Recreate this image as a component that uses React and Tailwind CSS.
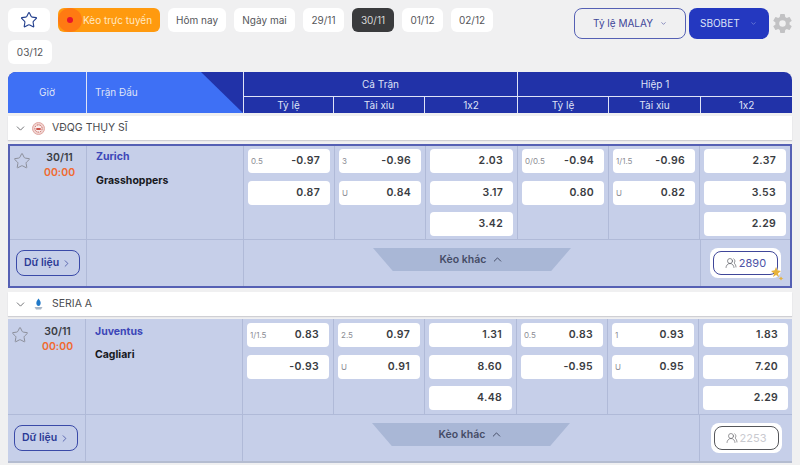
import React from "react";
import { Star, ChevronDown, ChevronUp, ChevronRight, UsersRound } from "lucide-react";
import { IoSettingsSharp } from "react-icons/io5";

const dates = [
	{ label: "Hôm nay", w: "w-[58px]" },
	{ label: "Ngày mai", w: "w-[61px]" },
	{ label: "29/11", w: "w-[41px]" },
	{ label: "30/11", w: "w-[42px]", active: true },
	{ label: "01/12", w: "w-[41px]" },
	{ label: "02/12", w: "w-[42px]" },
	{ label: "03/12", w: "w-[44px]" },
];

const matches = [
	{
		home: "Zurich",
		away: "Grasshoppers",
		selected: true,
		count: "2890",
		odds: [
			[["0.5", "-0.97"], ["", "0.87"]],
			[["3", "-0.96"], ["U", "0.84"]],
			[["", "2.03"], ["", "3.17"], ["", "3.42"]],
			[["0/0.5", "-0.94"], ["", "0.80"]],
			[["1/1.5", "-0.96"], ["U", "0.82"]],
			[["", "2.37"], ["", "3.53"], ["", "2.29"]],
		],
	},
	{
		home: "Juventus",
		away: "Cagliari",
		count: "2253",
		odds: [
			[["1/1.5", "0.83"], ["", "-0.93"]],
			[["2.5", "0.97"], ["U", "0.91"]],
			[["", "1.31"], ["", "8.60"], ["", "4.48"]],
			[["0.5", "0.83"], ["", "-0.95"]],
			[["1", "0.93"], ["U", "0.95"]],
			[["", "1.83"], ["", "7.20"], ["", "2.29"]],
		],
	},
];

const Pill = ({ item }) => (
	<button
		className={`h-6 ${item.w} rounded-md text-[10px] ${
			item.active ? "bg-[#3a3b3d] text-[#d8d8d8]" : "bg-white text-[#55565a]"
		}`}
	>
		{item.label}
	</button>
);

const SwissLogo = () => (
	<svg width="13" height="13" viewBox="0 0 13 13">
		<circle cx="6.5" cy="6.5" r="6" fill="#f0d3d0" stroke="#dfa7a2" />
		<circle cx="6.5" cy="6.5" r="3.6" fill="#fbeeee" stroke="#c9685f" strokeDasharray="1.5 1" />
		<rect x="4.3" y="6" width="4.4" height="2" fill="#c9524a" />
	</svg>
);

const SerieLogo = () => (
	<svg width="13" height="13" viewBox="0 0 13 13">
		<path d="M6.500 0.500C8.200 2.400 8.900 4 8.600 5.800 8.300 7.400 7.500 8 6.500 8S4.700 7.400 4.400 5.800C4.100 4 4.800 2.400 6.500 0.500Z" fill="#1f78c8" />
		<path d="M2.500 9 10.500 9 9 11.500 4 11.500Z" fill="#a8b6c6" />
	</svg>
);

const League = ({ name, logo }) => (
	<div className="flex h-6 items-center bg-white pl-[6px] text-[10.5px] text-[#4a4b50] shadow-[0_1px_1px_#cfcfd4]">
		<ChevronDown size={13} strokeWidth={1.5} className="text-[#55565a]" />
		<span className="ml-[5px] flex w-[13px] justify-center">{logo}</span>
		<span className="ml-[7px]">{name}</span>
	</div>
);

const OddCell = ({ label, value }) => (
	<div className="flex h-[24px] items-center justify-between rounded-[4px] bg-white pl-[3px] pr-[10px]">
		<span className="text-[8px] text-[#8b8d94]">{label}</span>
		<span className="text-[10.5px] font-semibold tracking-[0.3px] text-[#3a3c42]">{value}</span>
	</div>
);

const Match = ({ match }) => {
	const { selected } = match;
	return (
		<div
			className={`grid bg-[#c6cfe9] ${
				selected
					? "grid-cols-[77px_157px_91px_91px_92px_91px_91px_90px] grid-rows-[93px_47px] border-2 border-[#5560b4]"
					: "grid-cols-[78px_157px_91px_91px_92px_91px_91px_93px] grid-rows-[95px_47px] border-b-2 border-[#b4bcd0]"
			}`}
		>
			<div className={`flex border-r border-[#b0bad8] pl-[3px] ${selected ? "pt-[4px]" : "pt-[5px]"}`}>
				<Star size={18} strokeWidth={1.3} className="mt-[2px] text-[#8a8d98]" />
				<div className="ml-[13px] flex flex-col items-center text-[10.5px] font-semibold leading-[15px]">
					<span className="text-[#3a3c42]">30/11</span>
					<span className="text-[#f06a30]">00:00</span>
				</div>
			</div>
			<div
				className={`flex flex-col border-r border-[#b0bad8] pl-[9px] text-[10.5px] font-bold leading-[14px] ${
					selected ? "gap-[10px] pt-[4px]" : "gap-[9px] pt-[6px]"
				}`}
			>
				<span className="text-[#3c46b8]">{match.home}</span>
				<span className="text-[#17181c]">{match.away}</span>
			</div>
			{match.odds.map((col, i) => (
				<div
					key={i}
					className={`flex flex-col gap-[7.5px] px-[4px] ${selected ? "pt-[3px]" : "pt-[4px]"} ${
						i < 5 ? "border-r border-[#b0bad8]" : ""
					}`}
				>
					{col.map((odd, j) => (
						<OddCell key={j} label={odd[0]} value={odd[1]} />
					))}
				</div>
			))}
			<div className="flex items-center border-r border-t border-[#b0bad8] pl-[6px]">
				<button className="flex h-[26px] w-[64px] items-center justify-center gap-[2px] rounded-lg border border-[#3a4aa8] text-[10.5px] font-semibold text-[#2b3a96]">
					Dữ liệu
					<ChevronRight size={11} strokeWidth={1.5} />
				</button>
			</div>
			<div className="border-r border-t border-[#b0bad8]" />
			<div className="col-span-5 flex items-start justify-center border-t border-[#b0bad8] pt-[8px]">
				<div className="flex h-[23px] w-[198px] items-center justify-center gap-[5px] bg-[#a9b7d6] text-[10.5px] font-semibold text-[#454c66] [clip-path:polygon(0_0,100%_0,90%_100%,10%_100%)]">
					Kèo khác
					<ChevronUp size={13} strokeWidth={1.8} />
				</div>
			</div>
			<div className="flex items-start justify-center border-l border-t border-[#b0bad8] pt-[8px]">
				<div className="relative rounded-lg bg-white p-[3px]">
					<div
						className={`flex h-[24px] w-[65px] items-center justify-center gap-[2px] rounded-lg border text-[11px] ${
							selected ? "border-[#3f4699] text-[#4c52a6]" : "border-[#55565a] text-[#c9cad0]"
						}`}
					>
						<UsersRound size={12} strokeWidth={1.2} className={selected ? "text-[#44464f]" : "text-[#55565a]"} />
						{match.count}
					</div>
					{selected && (
						<svg width="14" height="14" viewBox="0 0 14 14" className="absolute -bottom-[3px] -right-[3px]">
							<path d="M6 0 7.300 3.300 11 4 8 6.500 9 10 6 8 3 10 4 6.500 1 4 4.700 3.300Z" fill="#e6b23c" />
							<path d="M11 9.500 12 11 13.500 11.500 12 12 11 13.500 10 12 8.500 11.500 10 11Z" fill="#e6b23c" />
						</svg>
					)}
				</div>
			</div>
		</div>
	);
};

const App = () => {
	return (
		<div className="h-[465px] w-[800px] overflow-hidden bg-[#f0f0f1] px-2 pt-2 font-['Inter',sans-serif] [font-variant-ligatures:no-contextual]">
			<div className="flex h-[64px] items-start justify-between">
				<div className="flex w-[500px] flex-wrap gap-x-2 gap-y-[8px]">
					<button className="flex h-6 w-[42px] items-center justify-center rounded-md bg-white">
						<Star size={18} strokeWidth={1.5} className="text-[#24408e]" />
					</button>
					<button className="flex h-6 w-[102px] items-center rounded-md bg-[#ff9a0f] text-[10px] text-[#ffe9c4]">
						<span className="flex h-6 w-6 items-center justify-center rounded-full bg-[#ff7a12]">
							<span className="h-[6px] w-[6px] rounded-full bg-[#e8142c]" />
						</span>
						<span className="ml-[1px]">Kèo trực tuyến</span>
					</button>
					{dates.map((item) => (
						<Pill key={item.label} item={item} />
					))}
				</div>
				<div className="flex items-center">
					<button className="flex h-[31px] w-[112px] items-center justify-center gap-[7px] rounded-lg border border-[#5560b4] text-[10px] text-[#3f4699]">
						Tỷ lệ MALAY
						<ChevronDown size={7} strokeWidth={2} />
					</button>
					<button className="ml-[3px] flex h-[31px] w-[80px] items-center rounded-lg bg-[#2438c0] pl-[11px] text-[10px] text-[#dfe3f7]">
						SBOBET
						<ChevronDown size={7} strokeWidth={2} className="ml-[10px] text-[#8f9ce0]" />
					</button>
					<IoSettingsSharp size={21} className="ml-[3px] mr-[-1px] text-[#c2c2c4]" />
				</div>
			</div>

			<div className="grid h-[41px] grid-cols-[79px_157px_274px_274px] grid-rows-[25px_16px] overflow-hidden rounded-t-lg bg-[#2132a8] text-[10px] text-[#dfe3f7]">
				<div className="row-span-2 flex items-center justify-center border-r border-[#dfe3f7] bg-[#3e70f5]">Giờ</div>
				<div className="relative row-span-2 flex items-center border-r border-[#dfe3f7] bg-[#3e70f5] pl-[8px]">
					Trận Đấu
					<div className="absolute right-0 top-0 h-full w-[42px] bg-[#2132a8] [clip-path:polygon(0_0,100%_0,100%_100%)]" />
				</div>
				<div className="flex items-center justify-center border-b border-r border-[#dfe3f7]">Cả Trận</div>
				<div className="flex items-center justify-center border-b border-[#dfe3f7]">Hiệp 1</div>
				<div className="grid grid-cols-[90px_91px_93px] text-center leading-[16px]">
					<div className="border-r border-[#dfe3f7]">Tỷ lệ</div>
					<div className="border-r border-[#dfe3f7]">Tài xỉu</div>
					<div className="border-r border-[#dfe3f7]">1x2</div>
				</div>
				<div className="grid grid-cols-[91px_92px_91px] text-center leading-[16px]">
					<div className="border-r border-[#dfe3f7]">Tỷ lệ</div>
					<div className="border-r border-[#dfe3f7]">Tài xỉu</div>
					<div>1x2</div>
				</div>
			</div>

			<div className="mt-[3px] flex flex-col">
				<League name="VĐQG THỤY SĨ" logo={<SwissLogo />} />
				<div className="mt-[4px]">
					<Match match={matches[0]} />
				</div>
				<div className="mt-[4px]">
					<League name="SERIA A" logo={<SerieLogo />} />
				</div>
				<div className="mt-[3px]">
					<Match match={matches[1]} />
				</div>
			</div>
		</div>
	);
};

export default App;
